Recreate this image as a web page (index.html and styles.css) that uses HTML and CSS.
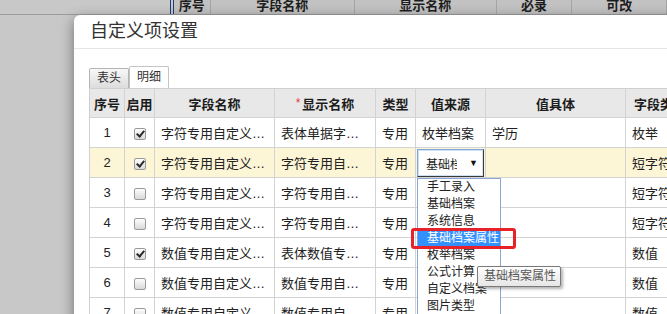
FILE: index.html
```html
<!DOCTYPE html>
<html lang="zh-CN">

<head>
  <meta charset="UTF-8">
  <title>自定义项设置</title>
  <link rel="stylesheet" href="styles.css">
</head>

<body>
  <div class="page">
    <div class="bg-head">
      <div class="bg-rule"></div>
      <div class="bg-cell c-no">序号</div>
      <div class="bg-cell c-name">字段名称</div>
      <div class="bg-cell c-show">显示名称</div>
      <div class="bg-cell c-req">必录</div>
      <div class="bg-cell c-edit">可改</div>
    </div>
  </div>

  <div class="modal">
    <div class="modal-head">
      <h3 class="modal-title">自定义项设置</h3>
    </div>
    <div class="modal-body">
      <div class="tabs">
        <span class="tab">表头</span>
        <span class="tab active">明细</span>
      </div>

      <table class="grid">
        <colgroup>
          <col style="width:35px">
          <col style="width:30px">
          <col style="width:120px">
          <col style="width:101px">
          <col style="width:40px">
          <col style="width:70px">
          <col style="width:140px">
          <col style="width:90px">
        </colgroup>
        <thead>
          <tr>
            <th>序号</th>
            <th>启用</th>
            <th>字段名称</th>
            <th><span class="req">*</span>显示名称</th>
            <th>类型</th>
            <th>值来源</th>
            <th>值具体</th>
            <th class="left">字段类型</th>
          </tr>
        </thead>
        <tbody>
          <tr>
            <td class="num">1</td>
            <td class="chk"><span class="cb on"></span></td>
            <td>字符专用自定义…</td>
            <td>表体单据字…</td>
            <td>专用</td>
            <td>枚举档案</td>
            <td>学历</td>
            <td>枚举</td>
          </tr>
          <tr class="current">
            <td class="num">2</td>
            <td class="chk"><span class="cb on"></span></td>
            <td>字符专用自定义…</td>
            <td>字符专用自…</td>
            <td>专用</td>
            <td class="sel-cell">
              <div class="select">
                <span class="select-text">基础档案属性</span>
                <span class="select-arrow">▼</span>
              </div>
              <div class="dropdown">
                <div class="opt">手工录入</div>
                <div class="opt">基础档案</div>
                <div class="opt">系统信息</div>
                <div class="opt hover">基础档案属性</div>
                <div class="opt">枚举档案</div>
                <div class="opt">公式计算</div>
                <div class="opt">自定义档案</div>
                <div class="opt">图片类型</div>
                <div class="mark"></div>
                <div class="tip">基础档案属性</div>
              </div>
            </td>
            <td></td>
            <td>短字符</td>
          </tr>
          <tr>
            <td class="num">3</td>
            <td class="chk"><span class="cb"></span></td>
            <td>字符专用自定义…</td>
            <td>字符专用自…</td>
            <td>专用</td>
            <td></td>
            <td></td>
            <td>短字符</td>
          </tr>
          <tr>
            <td class="num">4</td>
            <td class="chk"><span class="cb"></span></td>
            <td>字符专用自定义…</td>
            <td>字符专用自…</td>
            <td>专用</td>
            <td></td>
            <td></td>
            <td>短字符</td>
          </tr>
          <tr>
            <td class="num">5</td>
            <td class="chk"><span class="cb on"></span></td>
            <td>数值专用自定义…</td>
            <td>表体数值专…</td>
            <td>专用</td>
            <td></td>
            <td></td>
            <td>数值</td>
          </tr>
          <tr>
            <td class="num">6</td>
            <td class="chk"><span class="cb"></span></td>
            <td>数值专用自定义…</td>
            <td>数值专用自…</td>
            <td>专用</td>
            <td></td>
            <td></td>
            <td>数值</td>
          </tr>
          <tr>
            <td class="num">7</td>
            <td class="chk"><span class="cb"></span></td>
            <td>数值专用自定义…</td>
            <td>数值专用自…</td>
            <td>专用</td>
            <td></td>
            <td></td>
            <td>数值</td>
          </tr>
        </tbody>
      </table>
    </div>
  </div>
</body>

</html>
```

FILE: styles.css
```css
html,
body {
  margin: 0;
  height: 100%;
  overflow: hidden;
}

body {
  background-color: #c8c8c8;
  font-family: "Liberation Sans", "Noto Sans CJK SC", sans-serif;
  font-size: 13px;
  color: #222;
  position: relative;
}

/* page behind the dialog */
.bg-head {
  display: flex;
  height: 14px;
  padding-left: 170px;
  border-bottom: 1px solid #9c9c9c;
}

.bg-rule {
  width: 2px;
  border-left: 1px solid #1d3b7c;
  border-right: 1px solid #1d3b7c;
}

.bg-cell {
  box-sizing: border-box;
  height: 14px;
  line-height: 11px;
  text-align: center;
  font-weight: bold;
  color: #1e1e1e;
  background-color: #c2c2c2;
  border-right: 1px solid #a6a6a6;
}

.c-no { width: 39px; }
.c-name { width: 152px; }
.c-show { width: 150px; }
.c-req { width: 80px; }
.c-edit { width: 100px; }

/* dialog */
.modal {
  position: absolute;
  left: 74px;
  top: 15px;
  width: 720px;
  height: 400px;
  background-color: #fff;
  border-radius: 6px 0 0 0;
  box-shadow: 0 4px 14px rgba(0, 0, 0, .45);
}

.modal-head {
  height: 33px;
  border-bottom: 1px solid #e5e5e5;
  padding-left: 16px;
}

.modal-title {
  margin: 0;
  font-size: 18px;
  font-weight: normal;
  line-height: 33px;
  color: #333;
}

.modal-body {
  padding: 17px 0 0 15px;
}

.tabs {
  display: flex;
  align-items: flex-end;
  height: 22px;
}

.tab {
  box-sizing: border-box;
  width: 40px;
  height: 20px;
  line-height: 18px;
  font-size: 12px;
  text-align: center;
  color: #333;
  border: 1px solid #b4b4b4;
  border-bottom: none;
  border-radius: 2px 2px 0 0;
  background: linear-gradient(#f8f8f8, #dcdcdc);
}

.tab.active {
  height: 22px;
  line-height: 21px;
  background: #fff;
  border-color: #c4c4c4;
}

/* grid */
.grid {
  table-layout: fixed;
  width: 626px;
  border-collapse: separate;
  border-spacing: 0;
  border-top: 1px solid #cfcfcf;
  border-left: 1px solid #cfcfcf;
}

.grid th,
.grid td {
  box-sizing: border-box;
  padding: 0 6px;
  border-right: 1px solid #d3d3d3;
  border-bottom: 1px solid #d3d3d3;
  white-space: nowrap;
  overflow: hidden;
}

.grid th {
  height: 29px;
  padding: 0;
  background-color: #e8e8e8;
  font-weight: bold;
  text-align: center;
  color: #1c1c1c;
}

.grid th.left {
  text-align: left;
  padding-left: 8px;
}

.grid td {
  height: 30px;
  background-color: #fff;
}

.grid tr.current td {
  background-color: #fdf6d6;
}

.req {
  color: #e23b3b;
  font-weight: normal;
  font-size: 12px;
  margin-right: 2px;
  vertical-align: 2px;
}

.grid td.num {
  text-align: center;
  padding: 0;
}

.grid td.chk {
  text-align: center;
  padding: 0;
}

.cb {
  display: inline-block;
  box-sizing: border-box;
  width: 12px;
  height: 12px;
  vertical-align: middle;
  border: 1px solid #9a9a9a;
  border-radius: 2px;
  background: linear-gradient(#fdfdfd, #d9d9d9);
  position: relative;
}

.cb.on::after {
  content: "";
  position: absolute;
  left: 3px;
  top: 0px;
  width: 3px;
  height: 6px;
  border-right: 2px solid #2a2a2a;
  border-bottom: 2px solid #2a2a2a;
  transform: rotate(40deg);
}

/* select in edit row */
.grid td.sel-cell {
  padding: 1px 1px 0 1px;
  overflow: visible;
  position: relative;
}

.select {
  box-sizing: border-box;
  display: flex;
  align-items: center;
  height: 28px;
  border: 1px solid #7ea6dc;
  border-right-color: #3a3a3a;
  border-bottom-color: #3a3a3a;
  background-color: #fff;
  box-shadow: inset 0 0 0 1px #cfe0f5;
  font-size: 12px;
}

.select-text {
  width: 31px;
  margin-left: 8px;
  overflow: hidden;
  white-space: nowrap;
}

.select-text + .select-arrow {
  margin-left: 12px;
  font-size: 9px;
  color: #111;
}

.dropdown {
  position: absolute;
  left: 1px;
  top: 30px;
  width: 84px;
  box-sizing: border-box;
  background-color: #fff;
  border: 1px solid #8aa6d2;
  border-bottom: none;
  z-index: 2;
}

.opt {
  height: 17px;
  line-height: 16px;
  padding-left: 9px;
  font-size: 12px;
  color: #222;
}

.opt.hover {
  background-color: #3391ff;
  color: #fff;
}

.mark {
  position: absolute;
  left: -7px;
  top: 49px;
  width: 105px;
  height: 21px;
  box-sizing: border-box;
  border: 3px solid #e8222a;
  border-radius: 3px;
}

.tip {
  position: absolute;
  left: 59px;
  top: 87px;
  width: 84px;
  height: 21px;
  box-sizing: border-box;
  line-height: 19px;
  padding-left: 6px;
  font-size: 12px;
  color: #575757;
  background: linear-gradient(#ffffff, #e6e6e6);
  border: 1px solid #7a7a7a;
  border-radius: 2px;
  box-shadow: 2px 2px 3px rgba(0, 0, 0, .3);
}
```
